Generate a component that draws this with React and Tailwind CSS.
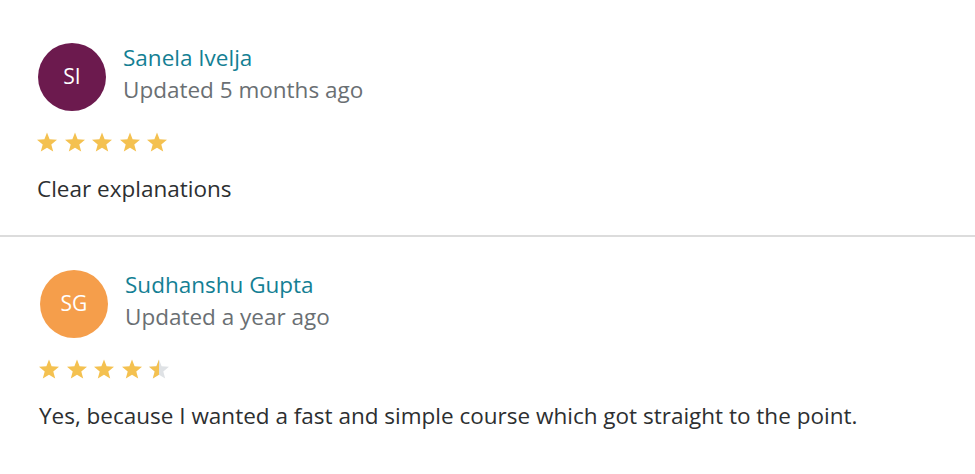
import React from "react";

const STAR = "10,0.6 12.6,7.2 20,7.7 14.3,12.4 16.2,19.6 10,15.7 3.8,19.6 5.7,12.4 0,7.7 7.4,7.2";

function Star({ fill = 1, id }) {
  return (
    <svg width="20" height="20" viewBox="0 0 20 20" className="block">
      {fill < 1 && (
        <defs>
          <clipPath id={id}>
            <rect x="0" y="0" width={20 * fill} height="20" />
          </clipPath>
        </defs>
      )}
      {fill < 1 && <polygon points={STAR} fill="#dfe2e5" />}
      <polygon points={STAR} fill="#f4c150" clipPath={fill < 1 ? `url(#${id})` : undefined} />
    </svg>
  );
}

function Review({ initials, color, name, updated, rating, text, shift, top }) {
  const stars = [];
  for (let i = 0; i < 5; i++) {
    const f = Math.max(0, Math.min(1, rating - i));
    stars.push(<Star key={i} fill={f} id={`c-${initials}-${i}`} />);
  }
  return (
    <div className={`${shift} ${top} pr-6`}>
      <div className="flex items-start">
        <div
          className={`w-[68px] h-[68px] rounded-full ${color} flex items-center justify-center text-white text-[21px] ml-[1px] shrink-0`}
        >
          {initials}
        </div>
        <div className="ml-[17px] flex flex-col leading-[32px] text-[22.5px] -mt-[1px]">
          <span className="text-[#147f94]">{name}</span>
          <span className="text-[#6a6f73]">{updated}</span>
        </div>
      </div>
      <div className="flex gap-[7.5px] mt-[21px]">{stars}</div>
      <p className="mt-[22px] text-[22.5px] leading-[30px] text-[#2d2f31]">{text}</p>
    </div>
  );
}

export default function App() {
  return (
    <div
      className="w-[975px] h-[474px] bg-white overflow-hidden"
      style={{ fontFamily: '"Open Sans", "Noto Sans", sans-serif' }}
    >
      <div className="pb-[31px] border-b-2 border-[#dcdcdc]">
        <Review
          initials="SI"
          color="bg-[#6c1a4e]"
          name="Sanela Ivelja"
          updated="Updated 5 months ago"
          rating={5}
          text="Clear explanations"
          shift="pl-[37px]"
          top="pt-[43px]"
        />
      </div>
      <Review
        initials="SG"
        color="bg-[#f59e4b]"
        name="Sudhanshu Gupta"
        updated="Updated a year ago"
        rating={4.5}
        text="Yes, because I wanted a fast and simple course which got straight to the point."
        shift="pl-[39px]"
        top="pt-[33px]"
      />
    </div>
  );
}
